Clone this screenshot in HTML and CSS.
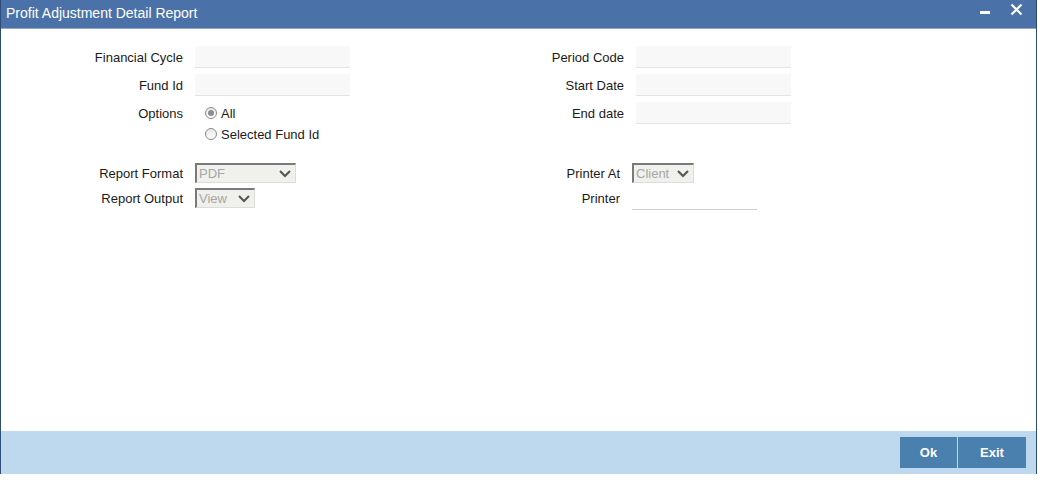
FILE: index.html
```html
<!DOCTYPE html>
<html lang="en">
<head>
  <meta charset="UTF-8" />
  <title>Profit Adjustment Detail Report</title>
  <link rel="stylesheet" href="styles.css">
</head>
<body>
  <div class="window">
    <div class="titlebar">
      <span class="title">Profit Adjustment Detail Report</span>
      <div class="controls">
        <span class="btn-min"></span>
        <svg class="btn-close" width="13" height="13" viewBox="0 0 13 13">
          <path d="M1.5 1.5 L11.5 11.5 M11.5 1.5 L1.5 11.5" stroke="#fff" stroke-width="2.2" fill="none" />
        </svg>
      </div>
    </div>

    <div class="content">
      <div class="grid grid-top">
        <label class="lbl">Financial Cycle</label>
        <div class="field"><input class="text" type="text" /></div>
        <label class="lbl">Period Code</label>
        <div class="field"><input class="text" type="text" /></div>

        <label class="lbl">Fund Id</label>
        <div class="field"><input class="text" type="text" /></div>
        <label class="lbl">Start Date</label>
        <div class="field"><input class="text" type="text" /></div>

        <label class="lbl">Options</label>
        <div class="field radios">
          <div class="radio-line first"><span class="radio checked"></span>All</div>
          <div class="radio-line"><span class="radio"></span>Selected Fund Id</div>
        </div>
        <label class="lbl">End date</label>
        <div class="field"><input class="text" type="text" /></div>
      </div>

      <div class="grid grid-bottom">
        <label class="lbl">Report Format</label>
        <div class="field">
          <div class="select sel-format"><span>PDF</span>
            <svg width="12" height="8" viewBox="0 0 12 8"><polyline points="1,1 6,6 11,1" stroke="#555" stroke-width="2" fill="none" /></svg>
          </div>
        </div>
        <label class="lbl">Printer At</label>
        <div class="field">
          <div class="select sel-printer"><span>Client</span>
            <svg width="12" height="8" viewBox="0 0 12 8"><polyline points="1,1 6,6 11,1" stroke="#555" stroke-width="2" fill="none" /></svg>
          </div>
        </div>

        <label class="lbl">Report Output</label>
        <div class="field">
          <div class="select sel-output"><span>View</span>
            <svg width="12" height="8" viewBox="0 0 12 8"><polyline points="1,1 6,6 11,1" stroke="#555" stroke-width="2" fill="none" /></svg>
          </div>
        </div>
        <label class="lbl">Printer</label>
        <div class="field"><input class="text printer" type="text" /></div>
      </div>
    </div>

    <div class="footer">
      <button class="action ok">Ok</button>
      <button class="action exit">Exit</button>
    </div>
  </div>
</body>
</html>
```

FILE: styles.css
```css
* {
  box-sizing: border-box;
}
html, body {
  margin: 0;
  padding: 0;
  background: #fff;
}
body {
  font-family: 'Liberation Sans', Arial, sans-serif;
  font-size: 13px;
  color: #1a1a1a;
}
.window {
  width: 1037px;
  height: 474px;
  border-left: 1px solid #2c4c7a;
  border-right: 1px solid #2c4c7a;
  display: flex;
  flex-direction: column;
}
.titlebar {
  height: 29px;
  background: #4a72a9;
  border-bottom: 1px solid #8ea6c2;
  display: flex;
  align-items: center;
  justify-content: space-between;
  padding-left: 5px;
}
.title {
  color: #fff;
  font-size: 14px;
  margin-top: -2px;
}
.controls {
  display: flex;
  align-items: flex-start;
  height: 100%;
  padding-top: 3px;
  margin-right: 13px;
}
.btn-min {
  width: 10px;
  height: 3px;
  background: #fff;
  margin-top: 8px;
  margin-right: 20px;
}
.content {
  flex: 1;
  padding-top: 17px;
}
.grid {
  display: grid;
  row-gap: 6px;
  align-items: start;
}
.grid-top {
  grid-template-columns: 194px 262px 179px 160px;
}
.grid-bottom {
  margin-top: 19px;
  row-gap: 5px;
  grid-template-columns: 194px 262px 175px 160px;
}
.lbl {
  text-align: right;
  padding-right: 12px;
  line-height: 23px;
  height: 22px;
}
.grid-bottom .lbl {
  line-height: 22px;
  height: 20px;
}
.text {
  display: block;
  width: 155px;
  height: 22px;
  border: none;
  border-bottom: 1px solid #e4e4e4;
  background: #f8f8f8;
  margin: 0;
  padding: 0 4px;
  font: inherit;
}
.text.printer {
  width: 125px;
  background: #fff;
  border-bottom: 1px solid #cfcfcf;
}
.radios {
  padding-left: 10px;
}
.radio-line {
  display: flex;
  align-items: center;
  height: 20px;
}
.radio-line.first {
  height: 22px;
}
.radio {
  width: 12px;
  height: 12px;
  border: 1px solid #8a8a8a;
  border-radius: 50%;
  background: linear-gradient(#e8e8e8, #fdfdfd);
  margin-right: 4px;
  position: relative;
}
.radio.checked::after {
  content: "";
  position: absolute;
  left: 2px;
  top: 2px;
  width: 6px;
  height: 6px;
  border-radius: 50%;
  background: #8c8c8c;
}
.select {
  height: 20px;
  display: flex;
  align-items: center;
  justify-content: space-between;
  background: #f0f0ec;
  border-top: 2px solid #7a7a7a;
  border-left: 2px solid #7a7a7a;
  border-right: 1px solid #dcdcdc;
  border-bottom: 1px solid #dcdcdc;
  padding: 0 4px 0 2px;
  color: #a6a6a6;
}
.select svg {
  flex: none;
}
.sel-format {
  width: 101px;
}
.sel-output {
  width: 60px;
}
.sel-printer {
  width: 62px;
}
.footer {
  height: 43px;
  background: #bed9ed;
  display: flex;
  justify-content: flex-end;
  align-items: flex-start;
  padding-top: 6px;
  padding-right: 10px;
  gap: 1px;
}
.action {
  height: 31px;
  border: none;
  background: #4a80ae;
  color: #fff;
  font-family: 'Liberation Sans', Arial, sans-serif;
  font-size: 13px;
  font-weight: bold;
  padding: 0;
  margin: 0;
}
.action.ok {
  width: 57px;
}
.action.exit {
  width: 68px;
}
```
